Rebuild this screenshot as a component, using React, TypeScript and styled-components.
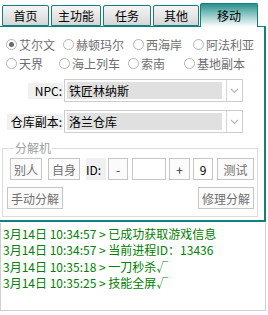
import React, { useState } from 'react';
import styled, { createGlobalStyle } from 'styled-components';

const GlobalStyle = createGlobalStyle`
  html, body {
    margin: 0;
    padding: 0;
    background: #fff;
  }
  body {
    font-family: "Noto Sans CJK SC", "Liberation Sans", sans-serif;
    font-size: 12px;
  }
`;

const TEAL = '#138080';

const Frame = styled.div`
  width: 268px;
  height: 315px;
  display: flex;
  flex-direction: column;
  overflow: hidden;
`;

const TabBar = styled.div`
  display: flex;
  align-items: flex-end;
  height: 26px;
  padding-left: 2px;
`;

const Tab = styled.div<{ $w: number; $gap: number; $active?: boolean }>`
  width: ${p => p.$w}px;
  height: ${p => (p.$active ? 24 : 21)}px;
  margin-left: ${p => p.$gap}px;
  box-sizing: border-box;
  border: 1px solid ${TEAL};
  border-bottom: ${p => (p.$active ? 'none' : `1px solid ${TEAL}`)};
  border-radius: 2px 2px 0 0;
  background: ${p =>
    p.$active
      ? 'linear-gradient(to bottom, #2b8f8c 0%, #8cc6c3 45%, #ffffff 100%)'
      : 'linear-gradient(to bottom, #f4f4f4 0%, #e6e6e6 50%, #d6d6d6 100%)'};
  display: flex;
  align-items: center;
  justify-content: center;
  font-size: 12px;
  color: #000;
  margin-bottom: ${p => (p.$active ? -1 : 0)}px;
  position: relative;
  z-index: ${p => (p.$active ? 1 : 0)};
`;

const Panel = styled.div`
  width: 266px;
  height: 196px;
  box-sizing: border-box;
  border-top: 1px solid ${TEAL};
  border-right: 2px solid ${TEAL};
  border-bottom: 2px solid ${TEAL};
  display: flex;
  flex-direction: column;
  padding-top: 8px;
`;

const RadioRow = styled.div`
  display: flex;
  height: 19px;
  align-items: center;
  padding-left: 6px;
`;

const RadioItem = styled.label<{ $w: number }>`
  width: ${p => p.$w}px;
  flex: none;
  display: flex;
  align-items: center;
  gap: 2px;
  color: #6e6e6e;
  font-size: 12px;
  white-space: nowrap;
`;

const Circle = styled.span<{ $on?: boolean }>`
  width: 11px;
  height: 11px;
  box-sizing: border-box;
  border-radius: 50%;
  border: 1px solid #b4b4b4;
  background: #fff;
  display: flex;
  align-items: center;
  justify-content: center;
  &::after {
    content: '';
    display: ${p => (p.$on ? 'block' : 'none')};
    width: 5px;
    height: 5px;
    border-radius: 50%;
    background: #6a6a6a;
  }
`;

const FieldRow = styled.div<{ $top: number }>`
  display: flex;
  align-items: center;
  margin-top: ${p => p.$top}px;
  height: 23px;
`;

const FieldLabel = styled.div<{ $w: number }>`
  width: 63px;
  display: flex;
  justify-content: flex-end;
  span {
    display: block;
    width: ${p => p.$w}px;
    height: 16px;
    line-height: 16px;
    background: #f0f0f0;
    text-align: right;
    color: #000;
    padding-right: 1px;
    box-sizing: border-box;
  }
`;

const Select = styled.div`
  width: 179px;
  height: 23px;
  margin-left: 1px;
  box-sizing: border-box;
  border: 1px solid #cdcdcd;
  display: flex;
  align-items: stretch;
  background: #fff;
`;

const SelectValue = styled.div`
  flex: 1;
  margin: 2px 4px 2px 2px;
  background: #e0e0e0;
  color: #000;
  padding-left: 2px;
  display: flex;
  align-items: center;
`;

const SelectArrow = styled.div`
  width: 15px;
  border-left: 1px solid #d6d6d6;
  display: flex;
  align-items: center;
  justify-content: center;
`;

const Group = styled.fieldset`
  margin: 9px 10px 0 2px;
  padding: 4px 3px 6px 4px;
  border: 1px solid #dcdcdc;
  height: 75px;
  box-sizing: border-box;
  display: flex;
  flex-direction: column;
  gap: 7px;
  legend {
    padding: 0 1px;
    margin-left: 7px;
    color: #a0a0a0;
    font-size: 12px;
    line-height: 12px;
  }
`;

const BtnRow = styled.div<{ $spread?: boolean }>`
  display: flex;
  align-items: center;
  justify-content: ${p => (p.$spread ? 'space-between' : 'flex-start')};
  margin-left: ${p => (p.$spread ? 0 : 3)}px;
`;

const Btn = styled.div<{ $w: number; $gap?: number; $dark?: boolean }>`
  width: ${p => p.$w}px;
  height: 22px;
  box-sizing: border-box;
  border: 1px solid #c6c6c6;
  background: #fbfbfb;
  color: ${p => (p.$dark ? '#333' : '#707070')};
  display: flex;
  align-items: center;
  justify-content: center;
  margin-left: ${p => p.$gap ?? 0}px;
  font-size: 12px;
`;

const IdLabel = styled.div`
  width: 20px;
  height: 22px;
  margin-left: 6px;
  background: #f0f0f0;
  display: flex;
  align-items: center;
  color: #000;
`;

const IdInput = styled.div<{ $w: number; $gap: number }>`
  width: ${p => p.$w}px;
  height: 22px;
  box-sizing: border-box;
  border: 1px solid #c6c6c6;
  background: #fff;
  margin-left: ${p => p.$gap}px;
  display: flex;
  align-items: center;
  justify-content: center;
  color: #000;
`;

const Log = styled.div`
  margin-top: 1px;
  width: 266px;
  height: 88px;
  box-sizing: border-box;
  border: 1px solid #cfcfcf;
  border-top: none;
  padding: 3px 0 0 2px;
  color: #008000;
  font-size: 12px;
  line-height: 16.3px;
`;

const tabs = [
  { name: '首页', w: 47, gap: 0 },
  { name: '主功能', w: 50, gap: 2 },
  { name: '任务', w: 48, gap: 2 },
  { name: '其他', w: 46, gap: 2 },
  { name: '移动', w: 58, gap: 1 },
];

const rows = [
  [
    { name: '艾尔文', w: 57 },
    { name: '赫顿玛尔', w: 70 },
    { name: '西海岸', w: 60 },
    { name: '阿法利亚', w: 70 },
  ],
  [
    { name: '天界', w: 53 },
    { name: '海上列车', w: 69 },
    { name: '索南', w: 56 },
    { name: '基地副本', w: 70 },
  ],
];

const logs = [
  '3月14日 10:34:57 > 已成功获取游戏信息',
  '3月14日 10:34:57 > 当前进程ID：13436',
  '3月14日 10:35:18 > 一刀秒杀√',
  '3月14日 10:35:25 > 技能全屏√',
];

function Arrow() {
  return (
    <svg width="9" height="6" viewBox="0 0 9 6">
      <path d="M1 1 L4.5 4.5 L8 1" fill="none" stroke="#b8b8b8" strokeWidth="1.2" />
    </svg>
  );
}

export default function App() {
  const [place, setPlace] = useState('艾尔文');

  return (
    <Frame>
      <GlobalStyle />
      <TabBar>
        {tabs.map((t, i) => (
          <Tab key={t.name} $w={t.w} $gap={t.gap} $active={i === 4}>{t.name}</Tab>
        ))}
      </TabBar>
      <Panel>
        {rows.map((row, ri) => (
          <RadioRow key={ri}>
            {row.map(r => (
              <RadioItem key={r.name} $w={r.w} onClick={() => setPlace(r.name)}>
                <Circle $on={place === r.name} />
                {r.name}
              </RadioItem>
            ))}
          </RadioRow>
        ))}
        <FieldRow $top={6}>
          <FieldLabel $w={35}><span>NPC:</span></FieldLabel>
          <Select>
            <SelectValue>铁匠林纳斯</SelectValue>
            <SelectArrow><Arrow /></SelectArrow>
          </Select>
        </FieldRow>
        <FieldRow $top={8}>
          <FieldLabel $w={56}><span>仓库副本:</span></FieldLabel>
          <Select>
            <SelectValue>洛兰仓库</SelectValue>
            <SelectArrow><Arrow /></SelectArrow>
          </Select>
        </FieldRow>
        <Group>
          <legend>分解机</legend>
          <BtnRow>
            <Btn $w={32}>别人</Btn>
            <Btn $w={32} $gap={6}>自身</Btn>
            <IdLabel>ID:</IdLabel>
            <Btn $w={20} $gap={2} $dark>-</Btn>
            <IdInput $w={34} $gap={4} />
            <Btn $w={21} $gap={3} $dark>+</Btn>
            <IdInput $w={20} $gap={3}>9</IdInput>
            <Btn $w={37} $gap={4}>测试</Btn>
          </BtnRow>
          <BtnRow $spread>
            <Btn $w={56}>手动分解</Btn>
            <Btn $w={56}>修理分解</Btn>
          </BtnRow>
        </Group>
      </Panel>
      <Log>
        {logs.map(l => (
          <div key={l}>{l}</div>
        ))}
      </Log>
    </Frame>
  );
}
